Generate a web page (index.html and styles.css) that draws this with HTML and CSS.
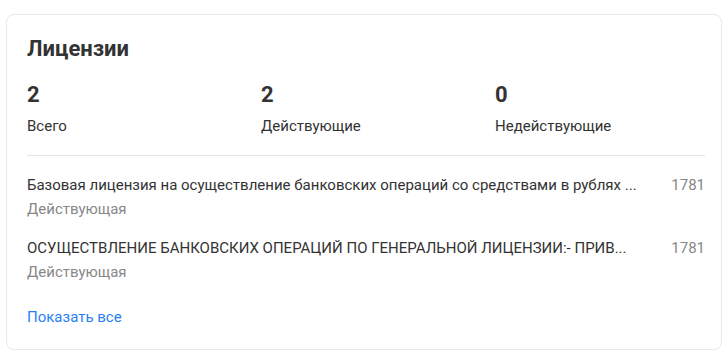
FILE: index.html
```html
<!DOCTYPE html>
<html lang="ru">
<head>
  <meta charset="UTF-8">
  <meta name="viewport" content="width=device-width, initial-scale=1.0">
  <title>Лицензии</title>
  <link rel="stylesheet" href="styles.css">
</head>
<body>
  <div class="card">
    <h2 class="card-title">Лицензии</h2>

    <div class="stats">
      <div class="stat">
        <div class="stat-value">2</div>
        <div class="stat-label">Всего</div>
      </div>
      <div class="stat">
        <div class="stat-value">2</div>
        <div class="stat-label">Действующие</div>
      </div>
      <div class="stat">
        <div class="stat-value">0</div>
        <div class="stat-label">Недействующие</div>
      </div>
    </div>

    <div class="license">
      <div class="license-row">
        <div class="license-name">Базовая лицензия на осуществление банковских операций со средствами в рублях ...</div>
        <div class="license-num">1781</div>
      </div>
      <div class="license-status">Действующая</div>
    </div>
    <div class="license">
      <div class="license-row">
        <div class="license-name">ОСУЩЕСТВЛЕНИЕ БАНКОВСКИХ ОПЕРАЦИЙ ПО ГЕНЕРАЛЬНОЙ ЛИЦЕНЗИИ:- ПРИВ...</div>
        <div class="license-num">1781</div>
      </div>
      <div class="license-status">Действующая</div>
    </div>

    <a href="#" class="show-all">Показать все</a>
  </div>
</body>
</html>
```

FILE: styles.css
```css
body{
  margin: 0;
  padding: 14px 4px 3px 6px;
  background-color: white;
  color: #333;
  font-family: Roboto, Arial, sans-serif;
}
.card{
  border: 1px solid #e8e8ec;
  border-radius: 8px;
  padding: 20px 16px 20px 20px;
  height: 336px;
  box-sizing: border-box;
}
.card-title{
  margin: 0;
  font-size: 22px;
  font-weight: bold;
  line-height: 28px;
  color: #333;
}
.stats{
  display: flex;
  margin-top: 20px;
  padding-bottom: 19px;
  border-bottom: 1px solid #e4e4e4;
}
.stat{
  width: 234px;
  flex-shrink: 0;
}
.stat:last-child{
  width: auto;
  flex: 1;
}
.stat-value{
  font-size: 22px;
  font-weight: bold;
  line-height: 24px;
}
.stat-label{
  font-size: 15px;
  line-height: 20px;
  margin-top: 9px;
}
.license{
  margin-top: 19px;
}
.license + .license{
  margin-top: 19px;
}
.license-row{
  display: flex;
  font-size: 15px;
  line-height: 20px;
}
.license-name{
  flex: 1;
  white-space: nowrap;
  overflow: hidden;
  text-overflow: ellipsis;
  padding-right: 30px;
}
.license-num{
  color: #888;
}
.license-status{
  font-size: 15px;
  line-height: 20px;
  color: #888;
  margin-top: 4px;
}
.show-all{
  display: inline-block;
  margin-top: 25px;
  font-size: 15px;
  line-height: 20px;
  color: #2a7ff0;
  text-decoration: none;
}
```
